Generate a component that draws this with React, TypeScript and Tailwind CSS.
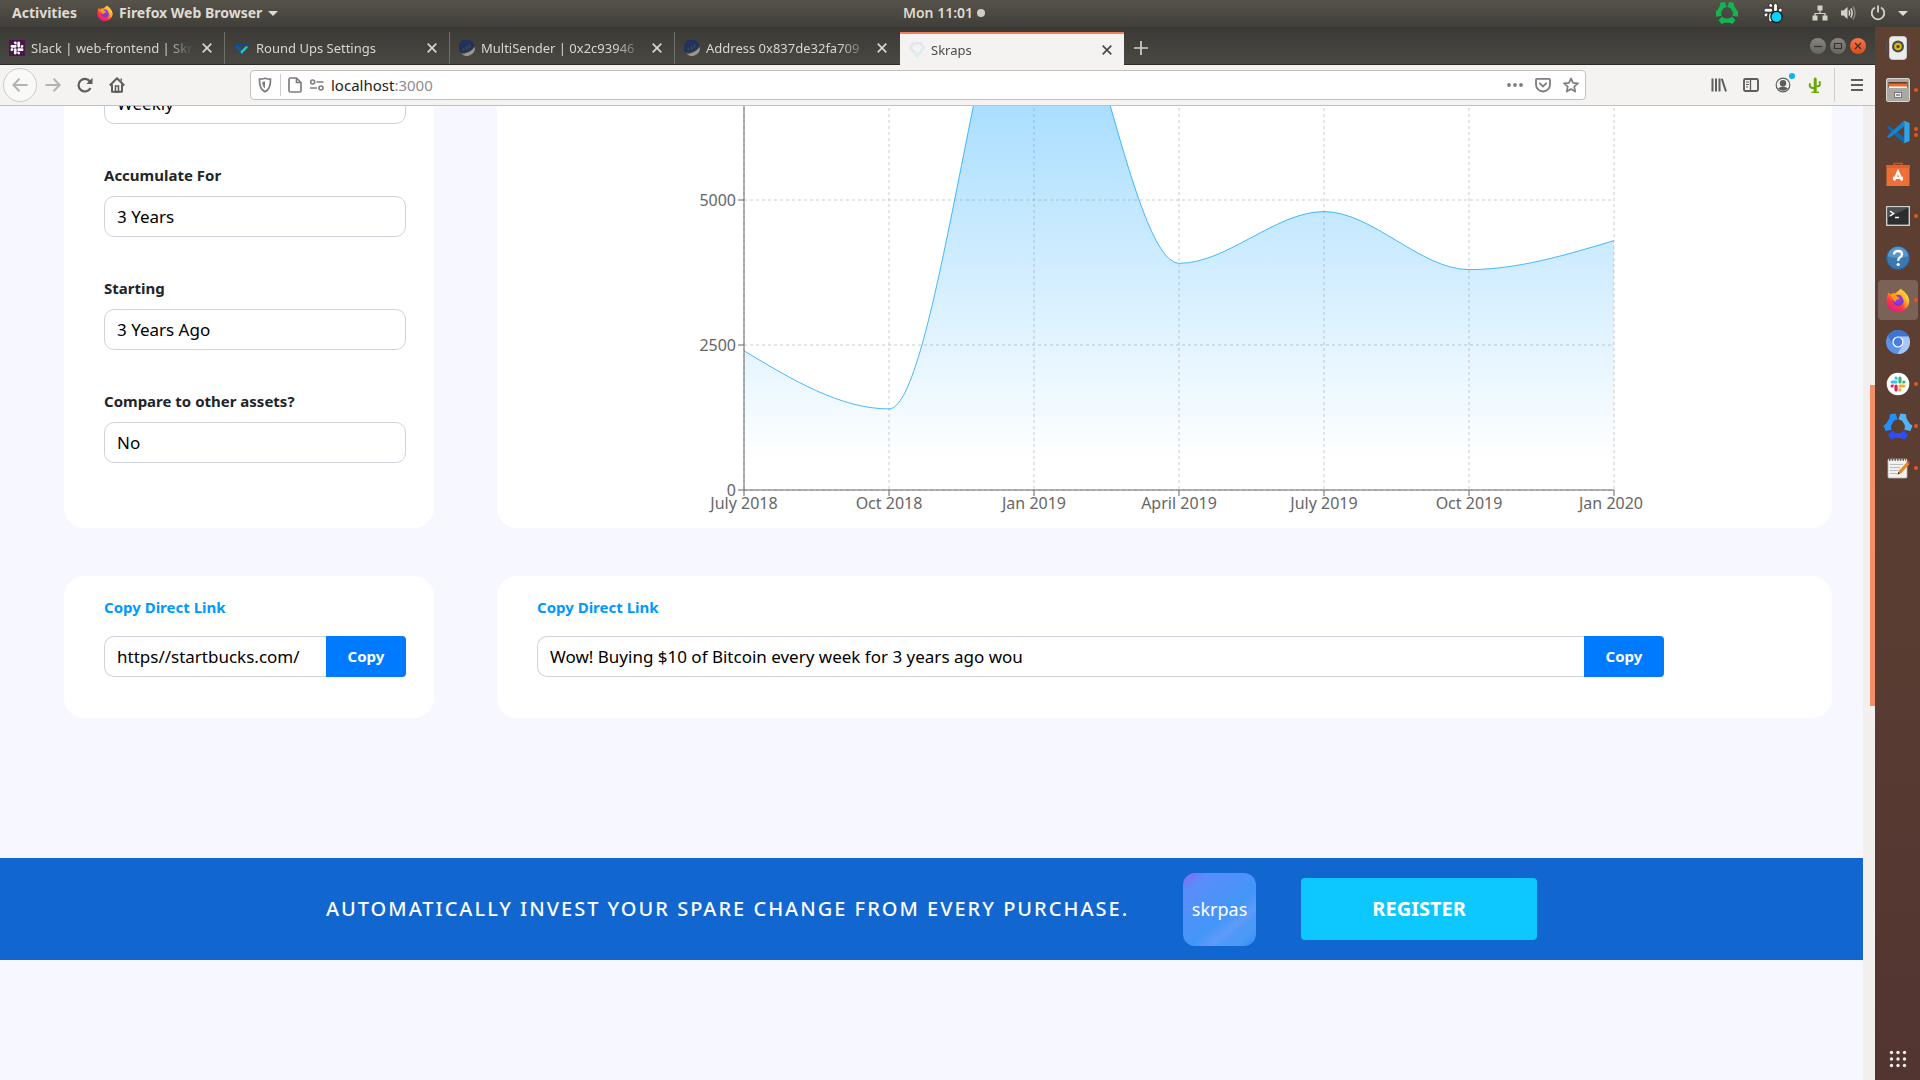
import React from 'react';

type Kids = { children: React.ReactNode };

/* ---------- drawings ---------- */

function Glyph({ children, box = 16, className = 'size-4' }: Kids & { box?: number; className?: string }) {
  return (
    <svg viewBox={`0 0 ${box} ${box}`} className={`shrink-0 ${className}`} fill="none" aria-hidden="true">
      {children}
    </svg>
  );
}

const ARM =
  'M5.04 15.17a2.53 2.53 0 0 1-2.52 2.52A2.53 2.53 0 0 1 0 15.17a2.53 2.53 0 0 1 2.52-2.52h2.52v2.52zM6.31 15.17a2.53 2.53 0 0 1 2.52-2.52 2.53 2.53 0 0 1 2.52 2.52v6.31A2.53 2.53 0 0 1 8.83 24a2.53 2.53 0 0 1-2.52-2.52v-6.31z';

function SlackMark({ colors }: { colors: string[] }) {
  return (
    <>
      {colors.map((c, i) => (
        <path key={i} d={ARM} fill={c} transform={`rotate(${i * 90} 12 12)`} />
      ))}
    </>
  );
}

function TriMark({ colors }: { colors: string[] }) {
  return (
    <>
      {colors.map((c, i) => (
        <path
          key={i}
          d="M-10 8.500L-6 4L-3.500 6L-2 6.500H2L3.500 6L6 4L10 8.500L6.500 13L3 11.500H-3L-6.500 13Z"
          fill={c}
          transform={`translate(13 13) rotate(${i * 120})`}
        />
      ))}
    </>
  );
}

function FirefoxMark({ id }: { id: string }) {
  return (
    <>
      <defs>
        <linearGradient id={`${id}-a`} x1="0.8" y1="0.05" x2="0.25" y2="1">
          <stop offset="0" stopColor="#fff44f" />
          <stop offset="0.35" stopColor="#ff980e" />
          <stop offset="0.65" stopColor="#ff3647" />
          <stop offset="1" stopColor="#e31587" />
        </linearGradient>
        <radialGradient id={`${id}-b`} cx="0.5" cy="0.4" r="0.6">
          <stop offset="0" stopColor="#b833e1" />
          <stop offset="1" stopColor="#5b3fd6" />
        </radialGradient>
        <linearGradient id={`${id}-c`} x1="1" y1="0" x2="0.4" y2="1">
          <stop offset="0" stopColor="#fff44f" />
          <stop offset="0.5" stopColor="#ffc42d" />
          <stop offset="1" stopColor="#ff5a36" />
        </linearGradient>
      </defs>
      <path
        d="M2.500 4.500C3.500 5 4 5.800 4.300 6.300C6 5.200 8 4.800 9.500 5.200C11 3.500 13 3 14.500 1C15 3.500 17 5 19 6.500C21 8 22.500 10 23 12.500C24 19 18.500 24 12 24C5.500 24 0.500 19 0.500 13C0.500 9.500 1.500 6.500 2.500 4.500Z"
        fill={`url(#${id}-a)`}
      />
      <circle cx="12.300" cy="12.300" r="5.600" fill={`url(#${id}-b)`} />
      <path
        d="M14.500 0.500C17 3 22.500 5.500 23.300 13C23 17.500 20 20.500 16.500 21C19 18 19 14 17 11.500C17 9 13 8 14.500 0.500Z"
        fill={`url(#${id}-c)`}
      />
      <path d="M4.500 7C7 5.500 10 6.500 11.500 9C13 9 13.500 10 13 10.800C11.500 11.800 9.500 11.500 9.500 14C8 13.500 6.500 10.500 4.500 7Z" fill="#ff9a1c" />
    </>
  );
}

const etherscan = (
  <Glyph>
    <path d="M1.300 12.300A8 8 0 1 1 15.300 5.500C13.500 9.500 8 13.500 1.300 12.300Z" fill="#21325b" />
    <path d="M4.500 10.500V8M7.500 10V6M10.500 8.500V4.500" stroke="#3f4658" strokeWidth="1.600" />
    <path d="M2.500 13.800C8 14 13 10.500 15.900 7A8 8 0 0 1 2.500 13.800Z" fill="#979695" />
  </Glyph>
);

const slackFavicon = (
  <svg viewBox="0 0 16 16" className="size-4 shrink-0" aria-hidden="true">
    <rect width="16" height="16" fill="#4a154b" />
    <g transform="translate(1.500 1.500) scale(0.540)">
      <SlackMark colors={['#fff', '#fff', '#fff', '#fff']} />
    </g>
  </svg>
);

const roundUps = (
  <Glyph>
    <path d="M3 3H12L14.500 6.500H11.500L10 5.500H5L4 6.500H0.800Z" fill="#0f4a8c" />
    <path d="M0.800 6L7 13.500L8.500 11L4.500 5.500Z" fill="#0c5aa6" />
    <path d="M14.500 6.500L7.500 14L6.500 11.800L11.500 6.500Z" fill="#19d3c5" />
  </Glyph>
);

const skrapsFavicon = (
  <Glyph>
    <path d="M4 1.500H12L14.500 6L8 14L1.500 6Z" stroke="#dfe7ec" strokeWidth="2.500" />
    <path d="M14.500 6L8 14L5 10.500" stroke="#d9eff0" strokeWidth="2.500" />
  </Glyph>
);

/* ---------- desktop top bar ---------- */

function TopBar() {
  return (
    <header className="grid h-[27px] shrink-0 grid-cols-[1fr_auto_1fr] items-center bg-linear-to-b from-[#57534b] to-[#3f3e39] pb-px text-sm leading-5 font-bold text-[#dfdbd2]">
      <div className="flex items-center gap-5 pl-3">
        <button type="button">Activities</button>
        <button type="button" className="flex items-center gap-1.5">
          <Glyph box={24}>
            <FirefoxMark id="fxs" />
          </Glyph>
          Firefox Web Browser
          <Glyph box={10} className="size-2.5">
            <path d="M0 3H10L5 8Z" fill="#dfdbd2" />
          </Glyph>
        </button>
      </div>
      <button type="button" className="flex items-center gap-1 pr-8 font-semibold">
        Mon 11:01
        <span className="size-2 rounded-full bg-[#d0ccc5]" />
      </button>
      <div className="flex items-center justify-end pr-3">
        <Glyph box={26} className="mr-6 size-[22px]">
          <TriMark colors={['#11b653', '#11b653', '#11b653']} />
        </Glyph>
        <svg viewBox="0 0 22 22" className="mr-7 size-[22px] shrink-0" aria-hidden="true">
          <g transform="translate(2 1.500) scale(0.760)" stroke="#111" strokeWidth="1">
            <SlackMark colors={['#fff', '#fff', '#fff', '#fff']} />
          </g>
          <circle cx="14.500" cy="15" r="5.600" fill="#00d4ff" stroke="#111" strokeWidth="1.200" />
        </svg>
        <Glyph className="mr-3 size-4">
          <path d="M5.500 0.500H10.500V5.500H5.500ZM0.500 10.500H5.500V15.500H0.500ZM10.500 10.500H15.500V15.500H10.500Z" fill="#d5d1c9" />
          <path d="M8 5V8.500M3 11V8.500H13V11" stroke="#d5d1c9" strokeWidth="1.200" />
        </Glyph>
        <Glyph className="mr-3.5 size-4">
          <path d="M1 5.500H3.500L7.500 2V14L3.500 10.500H1Z" fill="#d5d1c9" />
          <path d="M9 5.500Q10.500 8 9 10.500M10.800 3.500Q13.500 8 10.800 12.500" stroke="#d5d1c9" strokeWidth="1.600" />
          <path d="M13 1.500Q17 8 13 14.500" stroke="#86837c" strokeWidth="1.500" />
        </Glyph>
        <Glyph className="mr-3 size-4">
          <path d="M5 2.500A6.300 6.300 0 1 0 11 2.500" stroke="#d5d1c9" strokeWidth="1.800" />
          <path d="M8 0.500V7.500" stroke="#d5d1c9" strokeWidth="1.800" />
        </Glyph>
        <Glyph box={10} className="size-2.5">
          <path d="M0 3H10L5 8Z" fill="#dfdbd2" />
        </Glyph>
      </div>
    </header>
  );
}

/* ---------- browser chrome ---------- */

const tabs = [
  { title: 'Slack | web-frontend | Skraps', icon: slackFavicon },
  { title: 'Round Ups Settings', icon: roundUps },
  { title: 'MultiSender | 0x2c93946', icon: etherscan },
  { title: 'Address 0x837de32fa709', icon: etherscan },
  { title: 'Skraps', icon: skrapsFavicon, active: true },
];

function TabStrip() {
  return (
    <div className="flex h-[38px] items-end border-b border-[#2b2a27] bg-linear-to-b from-[#3a3935] to-[#494842] text-[13px] leading-5">
      {tabs.map((t) => (
        <div
          key={t.title}
          className={
            t.active
              ? '-mb-px flex h-[33px] w-56 items-center border-t-2 border-[#f0805a] bg-[#f4f3f2] pr-3 pl-[9px] text-[#4a4a48]'
              : 'flex h-8 w-[225px] items-center border-r border-[#716f69] pr-3 pl-[9px] text-[#dad6cd] nth-4:border-transparent'
          }
        >
          {t.icon}
          <span className="ml-1.5 min-w-0 flex-1 overflow-hidden whitespace-nowrap [mask-image:linear-gradient(to_right,black_82%,transparent)]">
            {t.title}
          </span>
          <button type="button" aria-label={`Close ${t.title}`} className="ml-2">
            <Glyph box={10} className="size-2.5">
              <path d="M0.700 0.700L9.300 9.300M9.300 0.700L0.700 9.300" stroke="currentColor" strokeWidth="1.700" />
            </Glyph>
          </button>
        </div>
      ))}
      <button type="button" aria-label="New tab" className="ml-2.5 flex h-8 items-center text-[#d5d1c9]">
        <Glyph box={14} className="size-3.5">
          <path d="M7 0V14M0 7H14" stroke="currentColor" strokeWidth="1.700" />
        </Glyph>
      </button>
      <div className="mr-[9px] mb-2.5 ml-auto flex gap-1 text-[#34332f]">
        {[
          { n: 'Minimize', c: 'bg-linear-to-b from-[#88867f] to-[#66645e]', d: 'M4 8.500H12' },
          { n: 'Maximize', c: 'bg-linear-to-b from-[#88867f] to-[#66645e]', d: 'M4.500 5.500H11.500V10.500H4.500Z' },
          { n: 'Close', c: 'bg-linear-to-b from-[#f4764e] to-[#dd4814]', d: 'M5 5L11 11M11 5L5 11' },
        ].map((b) => (
          <button key={b.n} type="button" aria-label={b.n} className={`size-4 rounded-full ${b.c}`}>
            <Glyph>
              <path d={b.d} stroke="currentColor" strokeWidth="1.200" />
            </Glyph>
          </button>
        ))}
      </div>
    </div>
  );
}

function Tool({ label, children, className = '' }: Kids & { label: string; className?: string }) {
  return (
    <button type="button" aria-label={label} className={`flex w-8 items-center justify-center ${className}`}>
      {children}
    </button>
  );
}

function Toolbar() {
  return (
    <div className="flex h-[41px] items-center border-b border-[#c2c0be] bg-[#f4f3f2] pr-[5px] pl-[3px] text-[#5d5d5c]">
      <button type="button" aria-label="Back" className="flex size-[34px] items-center justify-center rounded-full border border-[#cfcdcb] bg-[#f9f9f8] text-[#b4b3b2]">
        <Glyph>
          <path d="M15.500 8H1.500M7.500 1.800L1.300 8L7.500 14.200" stroke="currentColor" strokeWidth="2" />
        </Glyph>
      </button>
      <Tool label="Forward" className="text-[#b4b3b2]">
        <Glyph>
          <path d="M0.500 8H14.500M8.500 1.800L14.700 8L8.500 14.200" stroke="currentColor" strokeWidth="2" />
        </Glyph>
      </Tool>
      <Tool label="Reload">
        <Glyph>
          <path d="M13 4.500A6.300 6.300 0 1 0 13.500 11" stroke="currentColor" strokeWidth="2.200" />
          <path d="M15.500 0.800V7H9.300Z" fill="currentColor" />
        </Glyph>
      </Tool>
      <Tool label="Home">
        <Glyph>
          <path d="M0.800 8.500L8 1.300L15.200 8.500M3 7.500V14.800H13V7.500" stroke="currentColor" strokeWidth="2" strokeLinejoin="round" />
          <path d="M6.500 15V9H9.500V15Z" stroke="currentColor" strokeWidth="1.500" />
          <path d="M11.500 1.500H13V4.500L11.500 3Z" fill="currentColor" />
        </Glyph>
      </Tool>
      <div className="mx-[117px] flex h-[30px] flex-1 items-center rounded-sm border border-[#c5c0bc] bg-white pr-1.5 pl-[5px] text-[#7e7e7d]">
        <Glyph className="mx-px size-4">
          <path d="M8 1.200C10 2 12 2.200 13.500 2.200C13.700 8 12.500 12.500 8 14.800C3.500 12.500 2.300 8 2.500 2.200C4 2.200 6 2 8 1.200Z" stroke="currentColor" strokeWidth="1.700" />
          <path d="M8 4.200V11.500C5.800 10 5.200 7.500 5.200 4.800C6.300 4.700 7.200 4.500 8 4.200Z" fill="currentColor" />
        </Glyph>
        <span className="mx-1.5 h-[22px] w-px bg-[#cccbca]" />
        <Glyph className="size-4">
          <path d="M3.500 1H9.500L14 5.500V13.500Q14 15 12.500 15H3.500Q2 15 2 13.500V2.500Q2 1 3.500 1ZM9.500 1V5.500H14" stroke="currentColor" strokeWidth="1.700" />
        </Glyph>
        <Glyph className="mx-1.5 size-4">
          <circle cx="3.700" cy="5" r="2" stroke="currentColor" strokeWidth="1.600" />
          <circle cx="12" cy="11" r="2" stroke="currentColor" strokeWidth="1.600" />
          <path d="M7.500 5H14.500M1 11H8" stroke="currentColor" strokeWidth="1.700" />
        </Glyph>
        <p className="flex-1 text-[15px] leading-5">
          <span className="text-[#222]">localhost</span>
          <span className="text-[#8c8c8c]">:3000</span>
        </p>
        <div className="flex gap-3">
          <Glyph>
            <circle cx="2" cy="8" r="1.900" fill="currentColor" />
            <circle cx="8" cy="8" r="1.900" fill="currentColor" />
            <circle cx="14" cy="8" r="1.900" fill="currentColor" />
          </Glyph>
          <Glyph>
            <path d="M2 1.800H14Q15 1.800 15 2.800V7.500A7 7 0 0 1 1 7.500V2.800Q1 1.800 2 1.800Z" stroke="currentColor" strokeWidth="1.800" />
            <path d="M4.800 6.300L8 9.500L11.200 6.300" stroke="currentColor" strokeWidth="1.800" strokeLinecap="round" />
          </Glyph>
          <Glyph>
            <path d="M8 1.300L10 5.800L15 6.300L11.200 9.600L12.300 14.600L8 12L3.700 14.600L4.800 9.600L1 6.300L6 5.800Z" stroke="currentColor" strokeWidth="1.700" strokeLinejoin="round" />
          </Glyph>
        </div>
      </div>
      <Tool label="Library">
        <Glyph>
          <path d="M1.500 1.500V14.500M5 1.500V14.500M8.500 1.500V14.500M10.800 1.800L15 14.500" stroke="currentColor" strokeWidth="2" />
        </Glyph>
      </Tool>
      <Tool label="Sidebars">
        <Glyph>
          <rect x="1" y="2" width="14" height="12" rx="1.500" stroke="currentColor" strokeWidth="1.900" />
          <path d="M7.500 2V14" stroke="currentColor" strokeWidth="1.300" />
          <path d="M3 5H6M3 7.500H6M3 10H5" stroke="currentColor" strokeWidth="1.100" />
        </Glyph>
      </Tool>
      <Tool label="Account">
        <span className="relative">
          <Glyph>
            <circle cx="8" cy="8" r="6.800" stroke="currentColor" strokeWidth="1.200" />
            <circle cx="8" cy="6.200" r="3.200" fill="currentColor" />
            <path d="M3 11.500Q8 7.500 13 11.500Q8 16 3 11.500Z" fill="currentColor" />
          </Glyph>
          <span className="absolute -top-1 -right-1 size-1.5 rounded-full bg-[#00b3ff]" />
        </span>
      </Tool>
      <Tool label="Cactus extension">
        <Glyph>
          <path d="M8.200 15V2" stroke="#6aa806" strokeWidth="3" strokeLinecap="round" />
          <path d="M2.800 7V8.800Q3 11 7 11M12.800 5V7.500Q13 9.200 9.500 9.200" stroke="#6aa806" strokeWidth="2" strokeLinecap="round" />
          <path d="M4.500 15.300H12" stroke="#6aa806" strokeWidth="1.400" />
        </Glyph>
      </Tool>
      <span className="mx-[3px] h-[34px] w-px bg-[#cfcdcb]" />
      <Tool label="Menu" className="pl-1.5">
        <Glyph box={14} className="size-3.5">
          <path d="M1 2H13M1 7H13M1 12H13" stroke="currentColor" strokeWidth="2" />
        </Glyph>
      </Tool>
    </div>
  );
}

/* ---------- page ---------- */

const data = [
  { name: 'July 2018', v: 2400 },
  { name: 'Oct 2018', v: 1398 },
  { name: 'Jan 2019', v: 9800 },
  { name: 'April 2019', v: 3908 },
  { name: 'July 2019', v: 4800 },
  { name: 'Oct 2019', v: 3800 },
  { name: 'Jan 2020', v: 4300 },
];

const STEP = 145;
const LEFT = 247;
const BASE = 407;
const TOP = BASE - 4 * STEP;

/* Monotone cubic curve through the data points. */
function monotone(pts: [number, number][]) {
  const n = pts.length;
  const s = pts.slice(1).map((p, i) => (p[1] - pts[i][1]) / (p[0] - pts[i][0]));
  const m: number[] = new Array(n).fill(0);
  for (let i = 1; i < n - 1; i++) {
    const mean = (s[i - 1] + s[i]) / 2;
    m[i] = (Math.sign(s[i - 1]) + Math.sign(s[i])) * Math.min(Math.abs(s[i - 1]), Math.abs(s[i]), Math.abs(mean) / 2);
    if (s[i - 1] * s[i] <= 0) m[i] = 0;
  }
  m[0] = (3 * s[0] - m[1]) / 2;
  m[n - 1] = (3 * s[n - 2] - m[n - 2]) / 2;
  let d = `M${pts[0][0]},${pts[0][1]}`;
  for (let i = 1; i < n; i++) {
    const [x0, y0] = pts[i - 1];
    const [x1, y1] = pts[i];
    const dx = (x1 - x0) / 3;
    d += `C${x0 + dx},${y0 + dx * m[i - 1]} ${x1 - dx},${y1 - dx * m[i]} ${x1},${y1}`;
  }
  return d;
}

function Chart() {
  const pts = data.map((p, i) => [LEFT + i * STEP, BASE - (p.v * STEP) / 2500] as [number, number]);
  const line = monotone(pts);
  const right = LEFT + 6 * STEP;
  return (
    <svg viewBox="0 0 1335 445" className="block h-auto w-full" role="img" aria-label="Portfolio value over time">
      <defs>
        <linearGradient id="fade" x1="0" y1="0" x2="0" y2="1">
          <stop offset="5%" stopColor="#009dff" stopOpacity="0.8" />
          <stop offset="95%" stopColor="#009dff" stopOpacity="0" />
        </linearGradient>
      </defs>
      <g stroke="#ccc" strokeDasharray="3 3">
        {data.map((p, i) => (
          <line key={p.name} x1={LEFT + i * STEP} x2={LEFT + i * STEP} y1={TOP} y2={BASE} />
        ))}
        {[0, 1, 2].map((i) => (
          <line key={i} x1={LEFT} x2={right} y1={BASE - i * STEP} y2={BASE - i * STEP} />
        ))}
      </g>
      <path d={`${line}V${BASE}H${LEFT}Z`} fill="url(#fade)" fillOpacity="0.6" />
      <path d={line} stroke="#009dff" strokeOpacity="0.7" fill="none" />
      <g stroke="#666">
        <path d={`M${LEFT} ${TOP}V${BASE}H${right}`} fill="none" />
        {data.map((p, i) => (
          <line key={p.name} x1={LEFT + i * STEP} x2={LEFT + i * STEP} y1={BASE} y2={BASE + 6} />
        ))}
        {[0, 1, 2].map((i) => (
          <line key={i} x1={LEFT - 6} x2={LEFT} y1={BASE - i * STEP} y2={BASE - i * STEP} />
        ))}
      </g>
      <g fill="#666" className="text-base">
        {data.map((p, i) => (
          <text key={p.name} x={i === 6 ? right - 3 : LEFT + i * STEP} y={BASE + 19} textAnchor="middle">
            {p.name}
          </text>
        ))}
        {['0', '2500', '5000'].map((t, i) => (
          <text key={t} x={LEFT - 8} y={BASE - i * STEP + 6} textAnchor="end">
            {t}
          </text>
        ))}
      </g>
    </svg>
  );
}

const fields = [
  { id: 'frequency', label: '', value: 'Weekly' },
  { id: 'accumulate', label: 'Accumulate For', value: '3 Years' },
  { id: 'starting', label: 'Starting', value: '3 Years Ago' },
  { id: 'compare', label: 'Compare to other assets?', value: 'No' },
];

function CopyCard({ id, value, className = '' }: { id: string; value: string; className?: string }) {
  return (
    <section className={`rounded-[20px] bg-white pt-5 pb-[41px] pl-10 ${className}`}>
      <label htmlFor={id} className="block text-[15px] leading-[22px] font-bold text-[#0099ff]">
        Copy Direct Link
      </label>
      <div className="mt-[18px] flex h-[41px]">
        <input id={id} defaultValue={value} className="min-w-0 flex-1 rounded-l-[10px] border border-r-0 border-[#ced4da] px-3 text-[17px] text-black" />
        <button type="button" className="w-20 rounded-r-sm bg-[#007bff] text-[15px] font-bold text-white">
          Copy
        </button>
      </div>
    </section>
  );
}

function Page() {
  return (
    <main className="min-w-0 flex-1 overflow-hidden bg-[#f7f7ff]">
      <div className="-mt-[23px] grid grid-cols-[370px_1fr] gap-x-[63px] gap-y-12 pr-[31px] pl-16">
        <form className="flex flex-col gap-10 rounded-b-[20px] bg-white pr-7 pb-[65px] pl-10">
          {fields.map((f) => (
            <div key={f.id} className="flex flex-col gap-2.5">
              {f.label && (
                <label htmlFor={f.id} className="text-[15px] leading-[22px] font-bold text-[#212529]">
                  {f.label}
                </label>
              )}
              <input
                id={f.id}
                aria-label={f.label || 'Frequency'}
                defaultValue={f.value}
                className="h-[41px] w-full rounded-[10px] border border-[#ced4da] px-3 text-[17px] text-black"
              />
            </div>
          ))}
        </form>
        <section className="rounded-b-[20px] bg-white">
          <Chart />
        </section>
        <CopyCard id="link" value="https//startbucks.com/" className="pr-7" />
        <CopyCard id="share" value="Wow! Buying $10 of Bitcoin every week for 3 years ago wou" className="pr-42" />
      </div>
      <section className="mt-[140px] flex h-[102px] items-center justify-center bg-[#1166cf] text-white">
        <h2 className="text-xl leading-7 font-medium tracking-[2px] whitespace-nowrap">
          AUTOMATICALLY INVEST YOUR SPARE CHANGE FROM EVERY PURCHASE.
        </h2>
        <div className="ml-[54px] flex size-[73px] items-center justify-center rounded-xl bg-[linear-gradient(140deg,#7e6cf8_2%,#5a8dfa_16%,#4396f8_58%,#5f9bf8_72%,#4f9af8_76%,#4a98f7_88%,#2f8bf6)] text-lg">
          skrpas
        </div>
        <button type="button" className="ml-[45px] h-[62px] w-[236px] rounded bg-[#0dc7ff] text-xl font-bold">
          REGISTER
        </button>
      </section>
    </main>
  );
}

/* ---------- dock ---------- */

const dock: { name: string; dots?: number; active?: boolean; art: React.ReactNode }[] = [
  {
    name: 'Rhythmbox',
    art: (
      <>
        <rect x="3.500" y="0.500" width="17" height="23" rx="3" fill="#ececec" stroke="#c9c9c9" />
        <circle cx="12" cy="10.500" r="6" fill="#4c4c4c" />
        <circle cx="12" cy="10.500" r="3.800" fill="#d9b80c" />
        <circle cx="12" cy="10.500" r="1.600" fill="#4a4420" />
        <path d="M1.200 5Q-0.500 11 1.200 17M22.800 5Q24.500 11 22.800 17" stroke="#56525f" strokeWidth="1.200" />
      </>
    ),
  },
  {
    name: 'Files',
    dots: 1,
    art: (
      <>
        <rect x="0.500" y="0.500" width="23" height="23" rx="1.500" fill="#a8a6a3" stroke="#d7d5d2" />
        <path d="M2.500 4H21.500V10H2.500Z" fill="#63372a" />
        <path d="M3 7H21V10H3Z" fill="#fff" />
        <path d="M3 5.500H21V8.500H3Z" fill="#ee6a28" />
        <path d="M1 10H23V23H1Z" fill="#aaa8a5" />
        <rect x="8.500" y="14.500" width="7" height="5" fill="#eee" stroke="#777" />
        <path d="M10 17H14" stroke="#666" strokeWidth="1.200" />
      </>
    ),
  },
  {
    name: 'Visual Studio Code',
    dots: 2,
    art: (
      <>
        <path d="M0.800 7.500L3 5.800L18 17.500V23.500Z" fill="#0a6cb4" />
        <path d="M0.800 16.500L3 18.200L18 6.500V0.500Z" fill="#1583cf" />
        <path d="M17.500 0.500L23.500 3V21L17.500 23.500Q18.500 22.500 18.300 21V3Q18.500 1.500 17.500 0.500Z" fill="#2aa5ee" />
      </>
    ),
  },
  {
    name: 'Ubuntu Software',
    art: (
      <>
        <path d="M8 5V1.500H16V5" stroke="#d5491c" strokeWidth="1.600" />
        <path d="M0.500 3H23.500V24H0.500Z" fill="#ee7038" />
        <path d="M0.500 3H23.500V6H0.500Z" fill="#e65f28" />
        <path d="M8 18.500L12 9.500L16 18.500M7 15.800H17" stroke="#fff" strokeWidth="2.300" />
      </>
    ),
  },
  {
    name: 'Terminal',
    dots: 1,
    art: (
      <>
        <rect x="0.700" y="2.700" width="22.600" height="18.600" fill="#2b2e2f" stroke="#cfcfcf" strokeWidth="1.400" />
        <path d="M1.500 3.500H22.500L1.500 14Z" fill="#4d5152" />
        <path d="M4 7L7.500 9.500L4 12M9 13.500H13" stroke="#fff" strokeWidth="1.500" />
      </>
    ),
  },
  {
    name: 'Help',
    art: (
      <>
        <circle cx="12" cy="12" r="11.500" fill="#3c78b0" stroke="#2a5c90" />
        <path d="M1.500 10A10.600 10.600 0 0 1 22.500 10Q12 14 1.500 10Z" fill="#5b94c8" />
        <path d="M8 8.500Q8.200 5 12 5Q16 5 16 8.300Q16 10.300 13.500 11.800Q12.200 12.700 12.200 15" stroke="#fff" strokeWidth="2.300" />
        <circle cx="12.200" cy="18.500" r="1.600" fill="#fff" />
      </>
    ),
  },
  { name: 'Firefox', dots: 1, active: true, art: <FirefoxMark id="fxl" /> },
  {
    name: 'Chromium',
    art: (
      <>
        <circle cx="12" cy="12" r="12" fill="#5b92e8" />
        <path d="M12 6.500H22.700A12 12 0 0 0 1.800 5.800L7.200 14.700A5.500 5.500 0 0 1 12 6.500Z" fill="#3f74cf" />
        <path d="M22.700 6.500H12A5.500 5.500 0 0 1 16.800 14.700L11.500 24A12 12 0 0 0 22.700 6.500Z" fill="#a6c6f8" />
        <circle cx="12" cy="12" r="5.600" fill="#fff" />
        <circle cx="12" cy="12" r="4.400" fill="#4a80dd" />
      </>
    ),
  },
  {
    name: 'Slack',
    dots: 1,
    art: (
      <>
        <circle cx="12" cy="12" r="11.300" fill="#fff" />
        <g transform="translate(4.500 4.500) scale(0.625)">
          <SlackMark colors={['#e01e5a', '#36c5f0', '#2eb67d', '#ecb22e']} />
        </g>
      </>
    ),
  },
  {
    name: 'Skraps',
    dots: 1,
    art: (
      <g transform="translate(-1 -0.500)">
        <TriMark colors={['#2a4dff', '#1e90ff', '#52b4fb']} />
      </g>
    ),
  },
  {
    name: 'Text Editor',
    dots: 1,
    art: (
      <>
        <rect x="2" y="3" width="19" height="19" rx="1" fill="#f1f1ef" stroke="#b9b8b5" strokeWidth="0.800" />
        <path d="M3 3.500H20" stroke="#555" strokeWidth="2.500" strokeDasharray="1.500 1.200" />
        <path d="M4 8.500H17M4 11.500H14M4 14.500H12M4 17.500H11" stroke="#bbb" strokeWidth="1" />
        <path d="M11.500 18.500L13 14.500L21 6L23.500 8L15.500 17Z" fill="#e98a24" />
        <path d="M21 6L22.500 4.500L24 6.500L23.500 8Z" fill="#d63c3c" />
        <path d="M11.500 18.500L12.500 16L14 17.500Z" fill="#222" />
      </>
    ),
  },
];

function Dock() {
  return (
    <nav aria-label="Dock" className="flex w-[45px] shrink-0 flex-col bg-linear-to-b from-[#5f4132] via-[#5a3d32] to-[#523531]">
      {dock.map((d) => (
        <button key={d.name} type="button" aria-label={d.name} className="flex h-[42px] items-center pl-[3px]">
          <span className={`flex h-10 w-10 items-center ${d.active ? 'rounded-sm bg-[#7b6257]' : ''}`}>
            <Glyph box={24} className="ml-2 size-6 overflow-visible">
              {d.art}
            </Glyph>
            <span className="ml-auto flex flex-col gap-0.5">
              {Array.from({ length: d.dots ?? 0 }, (_, i) => (
                <span key={i} className="size-1 rounded-full bg-[#e95420]" />
              ))}
            </span>
          </span>
        </button>
      ))}
      <button type="button" aria-label="Show Applications" className="mt-auto mb-3 flex justify-center">
        <Glyph box={18} className="size-[18px]">
          {[2.500, 9, 15.500].map((y) => [2.500, 9, 15.500].map((x) => <circle key={`${x}-${y}`} cx={x} cy={y} r="1.700" fill="#f2efed" />))}
        </Glyph>
      </button>
    </nav>
  );
}

export default function App() {
  return (
    <div className="flex h-screen flex-col overflow-hidden font-['Noto_Sans',sans-serif]">
      <TopBar />
      <div className="flex min-h-0 flex-1">
        <div className="flex min-w-0 flex-1 flex-col">
          <TabStrip />
          <Toolbar />
          <div className="flex min-h-0 flex-1">
            <Page />
            <div className="flex w-3 shrink-0 flex-col items-end bg-[#f1f0ee] pt-[279px]">
              <div className="h-[321px] w-[5px] bg-[#f18f68]" />
            </div>
          </div>
        </div>
        <Dock />
      </div>
    </div>
  );
}
